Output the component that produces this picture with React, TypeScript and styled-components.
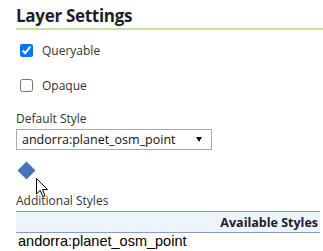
import React from "react";
import styled, { createGlobalStyle } from "styled-components";

const GlobalStyle = createGlobalStyle`
  html, body {
    margin: 0;
    padding: 0;
    background: #ffffff;
    overflow: hidden;
  }
`;

const Page = styled.div`
  position: relative;
  width: 323px;
  height: 251px;
  overflow: hidden;
  padding-left: 16px;
  box-sizing: border-box;
  font-family: "Open Sans", "Noto Sans", sans-serif;
  font-size: 12px;
  color: #333333;
`;

const Title = styled.h2`
  margin: 0 -16px 0 0;
  height: 30px;
  box-sizing: border-box;
  padding-top: 5px;
  font-size: 17px;
  line-height: 22px;
  font-weight: 700;
  letter-spacing: -0.3px;
  color: #1e1e2a;
  border-bottom: 2px solid #c6e2a0;
`;

const CheckRow = styled.label<{ $first?: boolean }>`
  display: flex;
  align-items: center;
  height: 35px;
  margin-top: ${(p) => (p.$first ? "3px" : "0")};
`;

const Check = styled.input`
  width: 13px;
  height: 13px;
  margin: 0 9px 0 4px;
  accent-color: #0075ff;
`;

const FieldLabel = styled.div<{ $top: number }>`
  margin-top: ${(p) => p.$top}px;
  line-height: 16px;
  height: 16px;
`;

const Select = styled.div`
  margin-top: 2px;
  width: 196px;
  height: 21px;
  box-sizing: border-box;
  border: 1px solid #a9a9a9;
  display: flex;
  align-items: center;
  justify-content: space-between;
  padding: 0 9px 0 5px;
  font-size: 12.5px;
  color: #111111;
`;

const Arrow = styled.span`
  width: 0;
  height: 0;
  border-left: 3.5px solid transparent;
  border-right: 3.5px solid transparent;
  border-top: 5px solid #111111;
`;

const Swatch = styled.svg`
  display: block;
  margin-top: 11px;
  margin-left: 1px;
`;

const StylesTable = styled.table`
  margin-top: 2px;
  width: 304px;
  border-collapse: collapse;
`;

const HeadCell = styled.th`
  height: 20px;
  padding: 0 2px 0 0;
  text-align: right;
  font-weight: 700;
  font-size: 12.5px;
  color: #1e1e2a;
  background: #ecf4fc;
  border-top: 1px solid #7f9fc8;
  border-bottom: 1px solid #7f9fc8;
`;

const Cell = styled.td`
  padding: 0 0 0 2px;
  font-family: "Liberation Sans", Arial, sans-serif;
  font-size: 14.5px;
  line-height: 16px;
  color: #000000;
`;

const Cursor = styled.svg`
  position: absolute;
  left: 36px;
  top: 178px;
`;

export default function App() {
  return (
    <Page>
      <GlobalStyle />
      <Title>Layer Settings</Title>
      <CheckRow $first>
        <Check type="checkbox" defaultChecked />
        Queryable
      </CheckRow>
      <CheckRow>
        <Check type="checkbox" />
        Opaque
      </CheckRow>
      <FieldLabel $top={8}>Default Style</FieldLabel>
      <Select>
        <span>andorra:planet_osm_point</span>
        <Arrow />
      </Select>
      <Swatch width="19" height="19" viewBox="0 0 19 19">
        <polygon points="9.5,0.5 18.5,9.5 9.5,18.5 0.5,9.5" fill="#4677b4" />
      </Swatch>
      <FieldLabel $top={13}>Additional Styles</FieldLabel>
      <StylesTable>
        <thead>
          <tr>
            <HeadCell>Available Styles</HeadCell>
          </tr>
        </thead>
        <tbody>
          <tr>
            <Cell>andorra:planet_osm_point</Cell>
          </tr>
        </tbody>
      </StylesTable>
      <Cursor width="13" height="20" viewBox="0 0 13 20">
        <path
          d="M0.5 0.5 L0.5 16 L4.2 12.4 L6.8 18.6 L9 17.7 L6.5 11.6 L11.5 11.6 Z"
          fill="#ffffff"
          stroke="#000000"
          strokeWidth="1"
        />
      </Cursor>
    </Page>
  );
}
